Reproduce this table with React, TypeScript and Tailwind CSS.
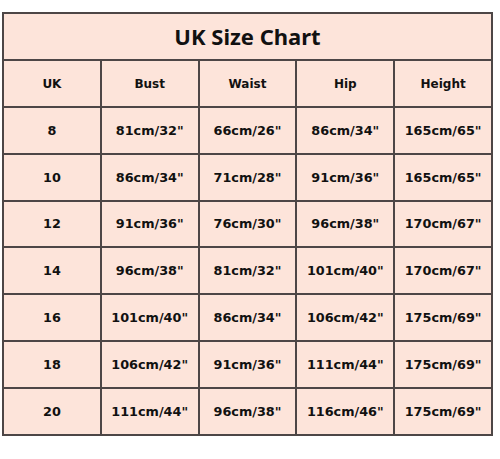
const columns = ['UK', 'Bust', 'Waist', 'Hip', 'Height'];

const rows = [
  ['8', '81cm/32"', '66cm/26"', '86cm/34"', '165cm/65"'],
  ['10', '86cm/34"', '71cm/28"', '91cm/36"', '165cm/65"'],
  ['12', '91cm/36"', '76cm/30"', '96cm/38"', '170cm/67"'],
  ['14', '96cm/38"', '81cm/32"', '101cm/40"', '170cm/67"'],
  ['16', '101cm/40"', '86cm/34"', '106cm/42"', '175cm/69"'],
  ['18', '106cm/42"', '91cm/36"', '111cm/44"', '175cm/69"'],
  ['20', '111cm/44"', '96cm/38"', '116cm/46"', '175cm/69"'],
];

export default function App() {
  return (
    <div className="h-[459px] w-[500px] bg-white pl-[2px] pt-[12px] font-['DejaVu_Sans',sans-serif]">
      <table className="w-[491px] table-fixed border-collapse bg-[#fde4da] text-[#111]">
        <thead>
          <tr className="h-[47px]">
            <th
              colSpan={5}
              className="border-2 border-[#4d4646] font-['Noto_Sans',sans-serif] text-[22px] font-bold"
            >
              UK Size Chart
            </th>
          </tr>
          <tr className="h-[47px]">
            {columns.map((col) => (
              <th key={col} className="border-2 border-[#4d4646] text-[12px] font-bold">
                {col}
              </th>
            ))}
          </tr>
        </thead>
        <tbody>
          {rows.map((row) => (
            <tr key={row[0]} className="h-[46.8px]">
              {row.map((cell, i) => (
                <td key={i} className="border-2 border-[#4d4646] text-center text-[12.8px] font-bold">
                  {cell}
                </td>
              ))}
            </tr>
          ))}
        </tbody>
      </table>
    </div>
  );
}
